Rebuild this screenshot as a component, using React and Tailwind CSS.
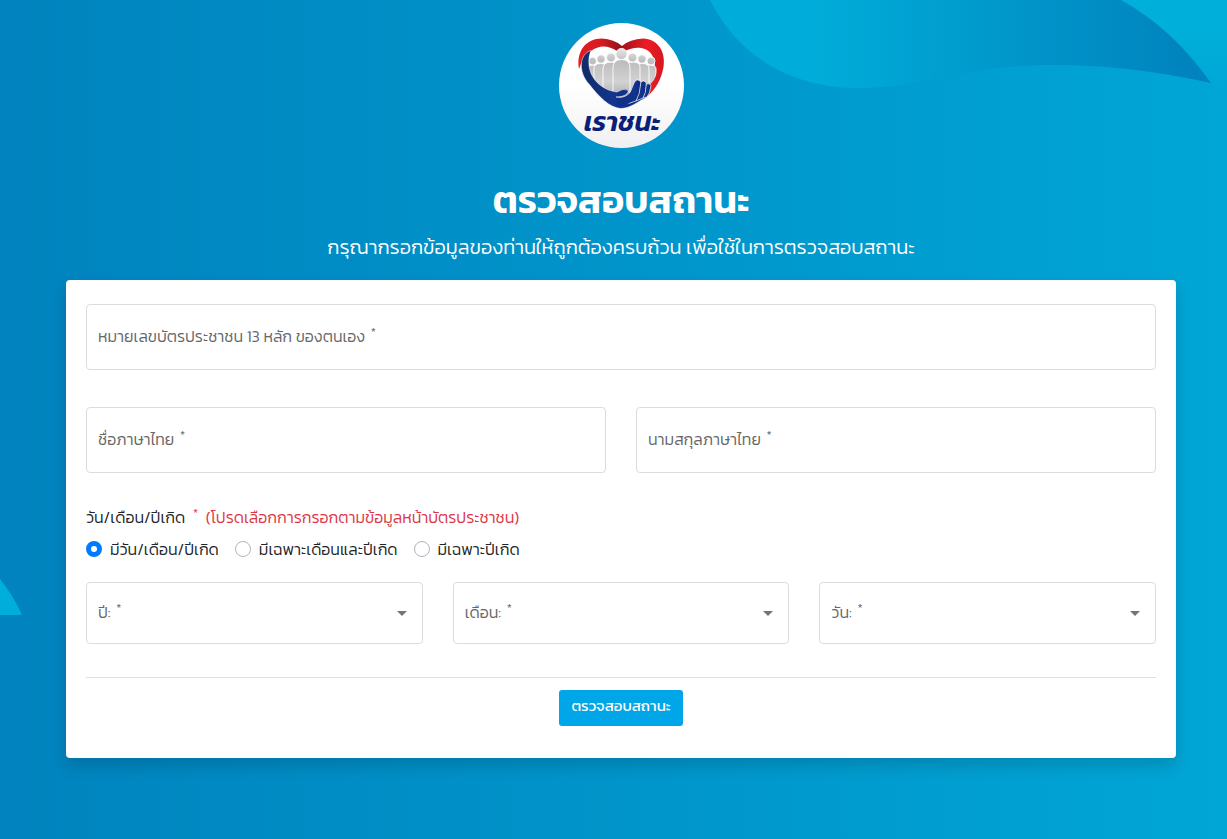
const field =
  "col-start-1 row-start-1 w-full rounded border border-[#dcdcdc] bg-transparent px-3 text-base text-[#212529] outline-none focus:border-[#007bff]";

function Caption({ id, children }) {
  return (
    <label
      htmlFor={id}
      className="pointer-events-none col-start-1 row-start-1 px-3 pb-0.5 text-base leading-6 font-light text-[#666]"
    >
      {children} <sup className="ml-0.5 text-xs">*</sup>
    </label>
  );
}

function TextField({ id, label }) {
  return (
    <div className="grid items-center">
      <input id={id} type="text" required className={`${field} h-[66px]`} />
      <Caption id={id}>{label}</Caption>
    </div>
  );
}

function SelectField({ id, label }) {
  return (
    <div className="grid items-center">
      <select id={id} required defaultValue="" className={`${field} h-[62px] appearance-none`}>
        <option value="" />
      </select>
      <Caption id={id}>{label}</Caption>
      <svg
        viewBox="0 0 10 5"
        className="pointer-events-none col-start-1 row-start-1 mr-4 h-[5px] w-[10px] justify-self-end fill-[#757575]"
        aria-hidden="true"
      >
        <path d="M0 0h10L5 5z" />
      </svg>
    </div>
  );
}

function Radio({ id, label, checked }) {
  return (
    <div className="flex items-center gap-2">
      <input
        id={id}
        type="radio"
        name="birth"
        defaultChecked={checked}
        className="size-4 shrink-0 appearance-none rounded-full border border-[#adb5bd] bg-white checked:border-[5px] checked:border-[#007bff]"
      />
      <label htmlFor={id}>{label}</label>
    </div>
  );
}

function Logo() {
  return (
    <svg viewBox="0 0 125 125" className="size-[125px]" role="img" aria-label="เราชนะ">
      <defs>
        <linearGradient id="disc" x1="0" y1="0" x2="0" y2="1">
          <stop offset="0.5" stopColor="#fff" />
          <stop offset="1" stopColor="#f0f0f2" />
        </linearGradient>
        <linearGradient id="red" x1="0" y1="0" x2="1" y2="0">
          <stop offset="0" stopColor="#e31b23" />
          <stop offset="0.25" stopColor="#d91b22" />
          <stop offset="0.48" stopColor="#991419" />
          <stop offset="0.6" stopColor="#b9161c" />
          <stop offset="0.8" stopColor="#ed1c24" />
          <stop offset="1" stopColor="#d4181f" />
        </linearGradient>
        <linearGradient id="grey" gradientUnits="userSpaceOnUse" x1="0" y1="26" x2="0" y2="76">
          <stop offset="0" stopColor="#e6e6e6" />
          <stop offset="0.25" stopColor="#bdbdbd" />
          <stop offset="0.65" stopColor="#d2d2d2" />
          <stop offset="1" stopColor="#a9a9a9" />
        </linearGradient>
        <linearGradient id="navy" x1="0" y1="0" x2="1" y2="0">
          <stop offset="0" stopColor="#112b66" />
          <stop offset="0.5" stopColor="#123590" />
          <stop offset="1" stopColor="#0c267e" />
        </linearGradient>
        <clipPath id="heart">
          <path d="M63 25C56 19 43 18 32 26C24 33 26 49 36 61Q47 73 63 81Q84 72 95 57C102 43 101 30 93 24C84 18 71 19 63 25Z" />
        </clipPath>
      </defs>
      <circle cx="62.5" cy="62.5" r="62.5" fill="url(#disc)" />
      <path
        d="M20 46C17 28 27 15.500 43 15.500Q55 16 63 23Q71 16 84 15.500C99 16 107 29 104.500 44C102 58 96 66 89 73L90 62C96 52 98 40 93 32C88 23 75 23 66 28L58 28C49 22 40 22 32 28Q23 36 20 46Z"
        fill="url(#red)"
      />
      <g clipPath="url(#heart)" fill="url(#grey)" stroke="#fff" strokeWidth="0.9">
        <path d="M29 80V46q0-4 5-4t6 4v34zM85 80V46q0-4 6-4t6 4V61L90 80z" />
        <circle cx="33.500" cy="38" r="4" />
        <circle cx="92" cy="38" r="4" />
        <path d="M35 80V46q0-5.500 6.500-5.500T48 46v34zM77 80V46q0-5.500 6.500-5.500T90 46v34z" />
        <circle cx="42" cy="36" r="4.200" />
        <circle cx="83" cy="36" r="4.200" />
        <path d="M44 80V46q0-7 8-7t8 7v34zM66 80V46q0-7 8-7t7 7v34z" />
        <circle cx="52" cy="34.500" r="4.500" />
        <circle cx="73.500" cy="34.500" r="4.500" />
        <path d="M54 80V45q0-8.500 8.500-8.500T71 45v35z" />
        <circle cx="62.500" cy="31" r="5.600" />
      </g>
      <path
        d="M32 27.500C20 31 19 49 30 61C40 74 51 85 62 85.500C72 85 78 79 88 74L86 64L76 62L72 69Q68 76 57 74C66 74 70 70 69 67Q64 65 58 69C42 67 31 55 30 42Q29 34 32 27.500Z"
        fill="url(#navy)"
        stroke="#fff"
        strokeWidth="0.5"
      />
      <g fill="url(#navy)" stroke="#fff" strokeWidth="0.7">
        <path d="M84 75Q86 69 86.500 63Q88 59.500 91 61Q92.500 62 91.500 65Q91 70 88 74Z" />
        <path d="M77 78Q80 69 81 61Q82.500 56.500 86 58.500Q88 60 87 63Q87 70 84 75Z" />
        <path d="M68 81Q71 68 75 60Q77 55.500 80.500 57.500Q82.500 59 81.500 62Q81 71 77 78Z" />
      </g>
      <path d="M57 76Q66 76 72 69L75 75L68 82L60 84Z" fill="#10308a" />
      <text
        x="63"
        y="108"
        textAnchor="middle"
        fill="#0b1f78"
        fontSize="27"
        fontWeight="600"
        fontStyle="italic"
      >
        เราชนะ
      </text>
    </svg>
  );
}

function Backdrop() {
  return (
    <>
      <svg
        viewBox="0 0 537 110"
        className="absolute top-0 right-0 h-[110px] w-[537px]"
        aria-hidden="true"
      >
        <defs>
          <linearGradient id="wave" gradientUnits="userSpaceOnUse" x1="130" y1="0" x2="500" y2="0">
            <stop offset="0" stopColor="#00acd9" />
            <stop offset="1" stopColor="#0083be" />
          </linearGradient>
          <linearGradient id="corner" x1="0" y1="0" x2="0" y2="1">
            <stop offset="0.3" stopColor="#00afda" />
            <stop offset="1" stopColor="#00a5d5" />
          </linearGradient>
        </defs>
        <path d="M430 0H537V102Q529 91 521 83Q485 30 430 0Z" fill="url(#corner)" />
        <path
          d="M20 0C50 60 105 88 170 88C235 88 275 65 365 65Q440 65 521 83Q482 28 431 0Z"
          fill="url(#wave)"
        />
      </svg>
      <svg
        viewBox="0 0 22 36"
        className="absolute top-[579px] left-0 h-[36px] w-[22px] fill-[#00aedb]"
        aria-hidden="true"
      >
        <path d="M0 0Q13 16 22 36H0Z" />
      </svg>
    </>
  );
}

export default function App() {
  return (
    <div
      lang="th"
      className="relative min-h-screen bg-linear-to-r from-[#0083be] to-[#00a6d6] pr-4 pb-20 pl-8 font-['Kanit','Prompt','Noto_Sans_Thai','Noto_Sans',sans-serif] lg:pr-0 lg:pl-[15px]"
    >
      <Backdrop />
      <main className="relative mx-auto max-w-[1110px] pt-[23px]">
        <header className="flex flex-col items-center text-center text-white">
          <Logo />
          <h1 className="mt-7 text-[38px] leading-[48px] font-semibold">ตรวจสอบสถานะ</h1>
          <p className="mt-[7px] mb-[17px] text-xl leading-8 font-light">
            กรุณากรอกข้อมูลของท่านให้ถูกต้องครบถ้วน เพื่อใช้ในการตรวจสอบสถานะ
          </p>
        </header>
        <form
          onSubmit={(e) => e.preventDefault()}
          className="rounded bg-white px-5 pt-6 pb-8 text-base leading-6 font-light text-[#212529] shadow-[0_8px_16px_rgba(0,0,0,0.15)]"
        >
          <TextField id="citizen" label="หมายเลขบัตรประชาชน 13 หลัก ของตนเอง" />
          <div className="mt-[37px] grid gap-[30px] sm:grid-cols-2">
            <TextField id="first" label="ชื่อภาษาไทย" />
            <TextField id="last" label="นามสกุลภาษาไทย" />
          </div>
          <fieldset className="mt-8">
            <legend>
              วัน/เดือน/ปีเกิด <sup className="mx-1 text-xs text-[#dc3545]">*</sup>{" "}
              <span className="text-[#dc3545]">(โปรดเลือกการกรอกตามข้อมูลหน้าบัตรประชาชน)</span>
            </legend>
            <div className="mt-2 flex flex-wrap gap-x-4">
              <Radio id="full" label="มีวัน/เดือน/ปีเกิด" checked />
              <Radio id="month-year" label="มีเฉพาะเดือนและปีเกิด" />
              <Radio id="year-only" label="มีเฉพาะปีเกิด" />
            </div>
          </fieldset>
          <div className="mt-[21px] grid gap-[30px] sm:grid-cols-3">
            <SelectField id="year" label="ปี:" />
            <SelectField id="month" label="เดือน:" />
            <SelectField id="day" label="วัน:" />
          </div>
          <div className="mt-[33px] flex justify-center border-t border-[#dfdfdf] pt-3">
            <button
              type="submit"
              className="h-9 min-w-[124px] rounded-[3px] bg-[#00a6e8] px-3 pb-1 text-[15px] font-normal text-white"
            >
              ตรวจสอบสถานะ
            </button>
          </div>
        </form>
      </main>
    </div>
  );
}
